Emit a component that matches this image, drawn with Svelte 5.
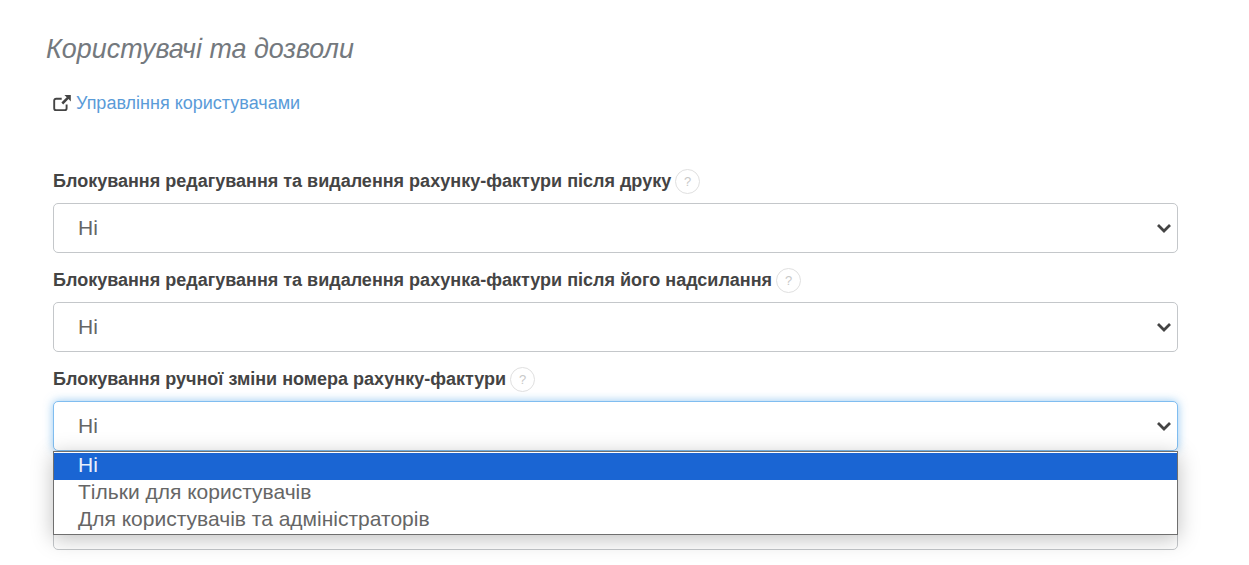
<script>
  const fields = [
    { label: "Блокування редагування та видалення рахунку-фактури після друку" },
    { label: "Блокування редагування та видалення рахунка-фактури після його надсилання" },
    { label: "Блокування ручної зміни номера рахунку-фактури", open: true },
    { label: "" } // o rotulo fica escondido atras da lista aberta
  ];
  const options = ["Ні", "Тільки для користувачів", "Для користувачів та адміністраторів"];
</script>

<main>
  <h4>Користувачі та дозволи</h4>
  <p class="link">
    <svg viewBox="0 0 18 18" width="18" height="18" aria-hidden="true">
      <path d="M13.6 10.5v3.7a1.9 1.9 0 0 1-1.9 1.9H3.1a1.9 1.9 0 0 1-1.9-1.9V6.6a1.9 1.9 0 0 1 1.9-1.9h5.6" fill="none" stroke="#444" stroke-width="1.9"/>
      <path d="M11.4 1h6.4v6.4l-2.3-2.3-5.3 5.3-1.8-1.8 5.3-5.3z" fill="#444"/>
    </svg>
    <a href="#users">Управління користувачами</a>
  </p>

  {#each fields as field}
    <div class="group">
      <div class="label">
        {#if field.label}
          <b>{field.label}</b>
          <span class="help">?</span>
        {/if}
      </div>
      <div class="wrap">
        <select class:focus={field.open}>
          {#if field.label}
            <option>{options[0]}</option>
          {/if}
        </select>
        <svg class="chevron" viewBox="0 0 16 10" width="16" height="10" aria-hidden="true">
          <path d="M2 2l6 6 6-6" fill="none" stroke="#444" stroke-width="2.8"/>
        </svg>
        {#if field.open}
          <ul class="dropdown">
            {#each options as option, i}
              <li class:selected={i === 0}>{option}</li>
            {/each}
          </ul>
        {/if}
      </div>
    </div>
  {/each}
</main>

<style>
  :global(body) {
    margin: 0;
    background: #fff;
    overflow: hidden;
  }
  main {
    padding: 35px 71px 0 53px;
    font-family: "Liberation Sans", Arial, sans-serif;
    color: #444;
  }

  /* titulo */
  h4 {
    margin: 0 0 0 -7px;
    font-size: 26.9px;
    line-height: 29px;
    font-weight: 400;
    font-style: italic;
    color: #74797e;
  }
  .link {
    display: flex;
    align-items: center;
    gap: 5px;
    margin: 29px 0 56px;
    height: 20px;
    font-size: 18px;
    line-height: 20px;
  }
  .link svg {
    flex: none;
  }
  .link a {
    color: #5a9bd8;
    text-decoration: none;
  }

  /* campos */
  .group {
    height: 99px;
  }
  .label {
    display: flex;
    align-items: center;
    gap: 4px;
    height: 24px;
    margin-bottom: 10px;
    font-size: 18px;
  }
  .label b {
    color: #444;
  }
  .help {
    display: flex;
    align-items: center;
    justify-content: center;
    box-sizing: border-box;
    width: 25px;
    height: 25px;
    border: 1px solid #e0e0e0;
    border-radius: 50%;
    font-size: 13px;
    color: #c8c8c8;
  }
  .wrap {
    position: relative;
  }
  select {
    display: block;
    box-sizing: border-box;
    width: 100%;
    height: 50px;
    padding: 5px 12px 7px 24px;
    border: 1px solid #c4c7ca;
    border-radius: 5px;
    background-color: #fff;
    color: #666;
    font-family: inherit;
    font-size: 21px;
    outline: 0;
    appearance: none;
  }
  select.focus {
    border-color: #80bdf0;
    box-shadow: 0 0 10px rgba(102, 175, 233, 0.7);
  }
  .chevron {
    position: absolute;
    right: 6px;
    top: 20px;
    pointer-events: none;
  }

  /* lista aberta */
  .dropdown {
    position: absolute;
    z-index: 2;
    top: 50px;
    left: 0;
    right: 0;
    margin: 0;
    padding: 1px 0 0;
    list-style: none;
    box-sizing: border-box;
    height: 84px;
    background: #fff;
    border: 1px solid #6f6f6f;
    box-shadow: 0 4px 20px rgba(0, 0, 0, 0.25);
    font-size: 21px;
    color: #666;
  }
  .dropdown li {
    height: 27px;
    line-height: 23px;
    padding-left: 24px;
  }
  .dropdown li.selected {
    background: #1a65d3;
    color: #e8f0fb;
  }
</style>
